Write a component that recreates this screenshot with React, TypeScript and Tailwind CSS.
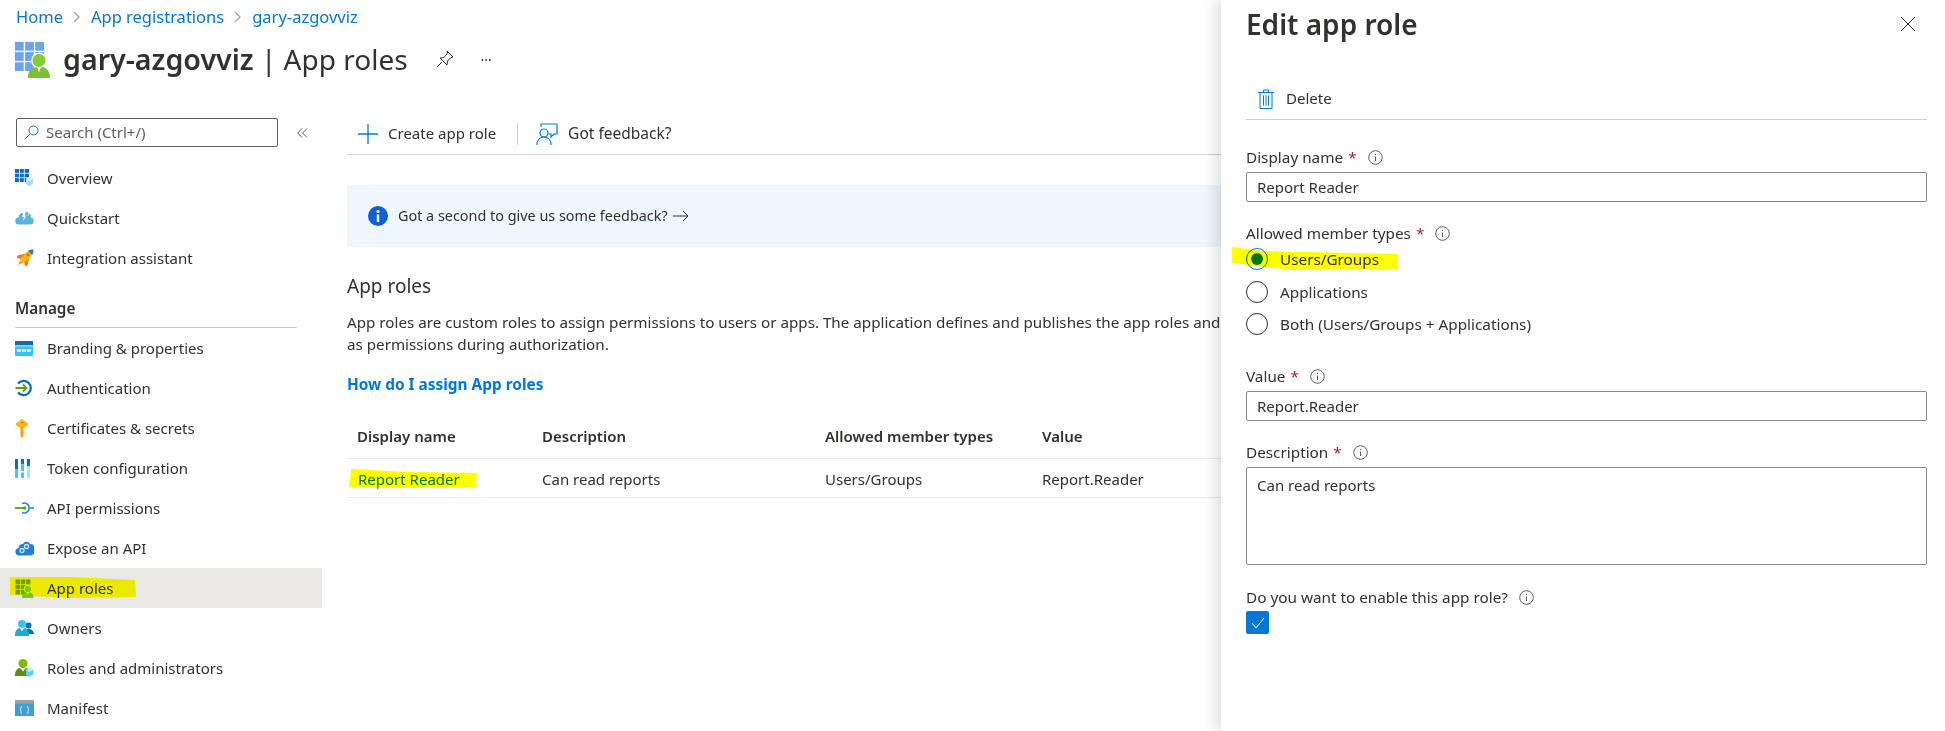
import React from "react";

const Grid = ({ c = "#6aa5f0" }: { c?: string }) => (
  <>
    {[0, 1, 2].map((r) =>
      [0, 1, 2].map((k) => (
        <rect key={`${r}${k}`} x={k * 11 + 1} y={r * 11 + 1} width="9.5" height="9.5" fill={c} />
      ))
    )}
  </>
);

const Person = ({ c = "#86cc30", d = "#7bc22f" }: { c?: string; d?: string }) => (
  <>
    <circle cx="27" cy="21" r="7" fill={c} />
    <path d="M15 40c0-8 4-11 9-12l3 5 3-5c5 1 9 4 9 12z" fill={d} />
    <path d="M25 28h4l-2 6z" fill="#fff" />
  </>
);

const AppRegIcon = ({ size }: { size: number }) => (
  <svg width={size} height={size} viewBox="0 0 40 40">
    <Grid />
    <circle cx="27" cy="21" r="8.5" fill="#fff" />
    <Person />
  </svg>
);

const icons: Record<string, React.ReactNode> = {
  Overview: (
    <svg width="18" height="18" viewBox="0 0 18 18">
      <path d="M0 0h14v13H0z" fill="#0f6cbd" />
      <path d="M4.500 0v13M9.300 0v13M0 4.300h14M0 8.700h14" stroke="#fff" strokeWidth=".8" />
      <path d="M11 10l3.500-2 3.500 2v5l-3.500 2.500L11 15z" fill="#a9dcf3" />
      <path d="M11 10l3.500 2 3.500-2-3.500-2z" fill="#d8f1fb" />
    </svg>
  ),
  Quickstart: (
    <svg width="19" height="14" viewBox="0 0 19 14">
      <path d="M4 13.500a3.500 3.500 0 0 1-.5-7A4.500 4.500 0 0 1 8 2c1-1.500 4-2 5.500 0a3.500 3.500 0 0 1 2 4.500A3.500 3.500 0 0 1 15 13.500z" fill="#59b4d9" />
      <path d="M8.500 1L7 6h2l-1 4 3.500-5.500H9.500L11 1zM13.500 2l-1 2.500h1.500z" fill="#fff" />
    </svg>
  ),
  "Integration assistant": (
    <svg width="19" height="19" viewBox="0 0 19 19">
      <g transform="rotate(45 9.500 9.500)">
        <path d="M9.500 -3C13 0 13.500 7 12.500 13h-6C5.500 7 6 0 9.500 -3z" fill="#fcb714" />
        <path d="M9.500 -3c1.600 1.300 2.500 2.800 3 4.500h-6c.5-1.700 1.400-3.200 3-4.500z" fill="#1e7fd0" />
        <circle cx="9.500" cy="4.500" r="1.500" fill="#f06a0a" />
        <path d="M6.500 6L2.500 12l1 2.500 3.500-2zM12.500 6l4 6-1 2.500-3.500-2z" fill="#ea7d0c" />
        <path d="M7.500 13h4l-2 6z" fill="#f7a70a" />
      </g>
    </svg>
  ),
  "Branding & properties": (
    <svg width="18" height="15" viewBox="0 0 18 15">
      <rect width="18" height="15" fill="#32c5f4" />
      <rect width="18" height="4.500" fill="#0f6cbd" />
      <rect y="4.500" width="18" height=".8" fill="#fff" />
      <path d="M2 8l1 3 1-3 1 3 1-3M7 8l1 3 1-3 1 3 1-3M12 8l1 3 1-3 1 3 1-3" fill="none" stroke="#fff" strokeWidth=".8" />
    </svg>
  ),
  Authentication: (
    <svg width="18" height="18" viewBox="0 0 18 18">
      <path d="M3 4.500a7.200 7.200 0 1 1 0 9" fill="none" stroke="#0f6cbd" strokeWidth="2.300" />
      <path d="M.500 9h10.500M8 5.500L11.500 9 8 12.500" fill="none" stroke="#58a300" strokeWidth="1.800" />
    </svg>
  ),
  "Certificates & secrets": (
    <svg width="14" height="19" viewBox="0 0 14 19">
      <path d="M7 0l6 4.500v2L7 10 1 6.500v-2z" fill="#fdb813" />
      <path d="M5.500 8h3v9.500L7 19l-1.500-1.500z" fill="#f7a70a" />
      <rect x="5.500" y="3" width="3" height="1.300" fill="#c98a08" />
      <rect x="8.500" y="12.500" width="1.300" height="1.600" fill="#f7a70a" />
    </svg>
  ),
  "Token configuration": (
    <svg width="15" height="19" viewBox="0 0 15 19">
      <rect x="0" width="3" height="19" fill="#45c6f2" />
      <rect x="0" width="3" height="10" fill="#0f6cbd" />
      <rect x="6" width="3" height="19" fill="#45c6f2" />
      <rect x="6" width="3" height="5" fill="#0f6cbd" />
      <rect x="6" y="12" width="3" height="1.500" fill="#fff" />
      <rect x="12" width="3" height="19" fill="#a7e3f7" />
      <rect x="12" width="3" height="7" fill="#0f6cbd" />
    </svg>
  ),
  "API permissions": (
    <svg width="19" height="14" viewBox="0 0 19 14">
      <path d="M7 2.500a5 5 0 1 1 0 9" fill="none" stroke="#2a8fbf" strokeWidth="1.600" />
      <path d="M14 7h5" stroke="#2a8fbf" strokeWidth="1.600" />
      <path d="M0 7h9" stroke="#58a300" strokeWidth="1.800" />
      <circle cx="9.500" cy="7" r="1.800" fill="#58a300" />
    </svg>
  ),
  "Expose an API": (
    <svg width="19" height="15" viewBox="0 0 19 15">
      <path d="M4 14.500a3.800 3.800 0 0 1-.6-7.500A5 5 0 0 1 8 3c1-2.500 5.500-3.500 7 0a4 4 0 0 1 .500 11.500z" fill="#1e7fe0" />
      <circle cx="7" cy="9.500" r="2" fill="none" stroke="#cfe6fb" strokeWidth="1.300" />
      <circle cx="11.500" cy="5.500" r="2" fill="none" stroke="#cfe6fb" strokeWidth="1.300" />
    </svg>
  ),
  "App roles": <AppRegIcon size={19} />,
  Owners: (
    <svg width="19" height="16" viewBox="0 0 19 16">
      <circle cx="13.500" cy="5.500" r="3" fill="#0f6cbd" />
      <path d="M9 14c0-3 2-5 4.500-5S19 11 19 14z" fill="#0f6cbd" />
      <circle cx="7" cy="4" r="4" fill="#32c5f4" />
      <path d="M0 16c0-5 2-7.500 4.500-8L7 11l2.500-3c2.500.5 4.500 3 4.500 8z" fill="#1fa7d8" />
    </svg>
  ),
  "Roles and administrators": (
    <svg width="19" height="18" viewBox="0 0 19 18">
      <circle cx="8" cy="4.500" r="4.500" fill="#7fba00" />
      <path d="M0 17c0-5 2-7.500 5-8l3 3 3-3c3 .5 4 3 4 8z" fill="#5e8c12" />
      <path d="M7 9h2l-1 4z" fill="#fff" />
      <path d="M11 11l3.500-2 4 2v4.500l-4 2.500-3.500-2z" fill="#5ed0f5" />
      <path d="M11 11l3.500 2 4-2-4-2z" fill="#b5ecfb" />
    </svg>
  ),
  Manifest: (
    <svg width="19" height="16" viewBox="0 0 19 16">
      <rect width="19" height="16" fill="#3f9fd4" />
      <rect width="19" height="3.500" fill="#a0a1a2" />
      <path d="M7 6.500c-1.500 0-1 1.500-1 2.500s-1 1-1 1 1 0 1 1-.5 2.500 1 2.500M12 6.500c1.500 0 1 1.500 1 2.500s1 1 1 1-1 0-1 1 .5 2.500-1 2.500" fill="none" stroke="#fff" strokeWidth=".8" />
    </svg>
  ),
};

const NavRow = ({ label, active }: { label: string; active?: boolean }) => (
  <div className={`relative flex h-10 items-center ${active ? "bg-[#ebe9e7]" : ""}`}>
    <span className="flex w-[47px] shrink-0 justify-start pl-[15px]">{icons[label]}</span>
    <span className="text-[#323130]">{label}</span>
    {active && (
      <svg className="absolute left-[10px] top-[8px] mix-blend-multiply" width="126" height="22" viewBox="0 0 126 22">
        <path d="M0 1L60 1 125 4 126 21 60 22 0 19z" fill="#ffff00" />
      </svg>
    )}
  </div>
);

const Info = () => (
  <svg width="15" height="15" viewBox="0 0 15 15" className="ml-[11px]">
    <circle cx="7.500" cy="7.500" r="6.800" fill="none" stroke="#605e5c" />
    <path d="M7.500 6.500v4.500" stroke="#605e5c" />
    <circle cx="7.500" cy="4.500" r=".7" fill="#605e5c" />
  </svg>
);

const Label = ({ text, req, className = "" }: { text: string; req?: boolean; className?: string }) => (
  <div className={`flex h-[22px] items-center text-[15.3px] text-[#323130] ${className}`}>
    <span>{text}</span>
    {req && <span className="ml-[5px] text-[#a4262c]">*</span>}
    <Info />
  </div>
);

const Field = ({ text, className = "" }: { text: string; className?: string }) => (
  <div className={`rounded-[2px] border border-[#8a8886] px-[10px] text-[#323130] ${className}`}>{text}</div>
);

const Radio = ({ label, checked, className = "" }: { label: string; checked?: boolean; className?: string }) => (
  <div className={`relative flex h-8 items-center ${className}`}>
    <span className={`flex size-[22px] items-center justify-center rounded-full border ${checked ? "border-[#0078d4]" : "border-[#323130]"}`}>
      {checked && <span className="size-[12px] rounded-full bg-[#0078d4]" />}
    </span>
    <span className="ml-[12px] text-[15.3px] text-[#323130]">{label}</span>
    {checked && (
      <svg className="absolute left-[-14px] top-[4px] mix-blend-multiply" width="166" height="23" viewBox="0 0 166 23">
        <path d="M0 0L30 4 166 7 166 22 60 23 0 16z" fill="#ffff00" />
      </svg>
    )}
  </div>
);

const Crumb = () => (
  <svg width="8" height="12" viewBox="0 0 8 12" className="mx-[10px]">
    <path d="M1 1l5 5-5 5" fill="none" stroke="#a19f9d" strokeWidth="1.200" />
  </svg>
);

export default function App() {
  return (
    <div className="relative h-[731px] w-[1945px] overflow-hidden bg-white font-['Noto_Sans',sans-serif] text-[15px]">
      <div className="flex h-[34px] items-center pl-4 text-[16.5px] text-[#0078d4]">
        <span>Home</span>
        <Crumb />
        <span>App registrations</span>
        <Crumb />
        <span>gary-azgovviz</span>
      </div>

      <div className="flex h-[50px] items-center pl-[14px]">
        <AppRegIcon size={37} />
        <h1 className="ml-[12px] text-[28px] text-[#323130]">
          <span className="text-[28.6px] font-semibold">gary-azgovviz</span> | App roles
        </h1>
        <svg width="18" height="18" viewBox="0 0 18 18" className="ml-[28px]" fill="none" stroke="#323130">
          <path d="M11 1l6 6-2 .5-3.500 3.500-.5 4-7-7 4-.5L11.500 3zM6 12l-5 5" />
        </svg>
        <span className="ml-[27px] mb-2 text-[14px] text-[#323130]">...</span>
      </div>

      <div className="flex">
        <aside className="w-[322px] shrink-0 pt-[34px]">
          <div className="flex items-center pl-4">
            <div className="flex h-[29px] w-[262px] items-center rounded-[2px] border border-[#605e5c] pl-[7px] text-[#605e5c]">
              <svg width="15" height="15" viewBox="0 0 15 15" fill="none" className="mr-[7px]">
                <circle cx="9.500" cy="5.500" r="4.500" stroke="#0078d4" />
                <path d="M6 9l-5 5" stroke="#0078d4" />
              </svg>
              Search (Ctrl+/)
            </div>
            <svg width="11" height="10" viewBox="0 0 11 10" fill="none" stroke="#605e5c" className="ml-[19px]">
              <path d="M5 0.500L.7 5 5 9.500M10 .5L5.700 5 10 9.500" />
            </svg>
          </div>

          <div className="mt-[11px]">
            <NavRow label="Overview" />
            <NavRow label="Quickstart" />
            <NavRow label="Integration assistant" />
            <div className="ml-[15px] mr-[25px] flex h-[50px] items-end border-b border-[#c8c6c4] pb-[7px] text-[15.3px] font-semibold text-[#323130]">
              Manage
            </div>
            <NavRow label="Branding & properties" />
            <NavRow label="Authentication" />
            <NavRow label="Certificates & secrets" />
            <NavRow label="Token configuration" />
            <NavRow label="API permissions" />
            <NavRow label="Expose an API" />
            <NavRow label="App roles" active />
            <NavRow label="Owners" />
            <NavRow label="Roles and administrators" />
            <NavRow label="Manifest" />
          </div>
        </aside>

        <main className="min-w-0 flex-1 pl-[25px] pt-[34px] text-[#323130]">
          <div className="flex h-[37px] items-center border-b border-[#d2d0ce] pb-[5px]">
            <svg width="20" height="20" viewBox="0 0 20 20" className="ml-[11px]" stroke="#0078d4"><path d="M10 0v20M0 10h20" strokeWidth="1.300" /></svg>
            <span className="ml-[10px]">Create app role</span>
            <span className="ml-[21px] h-[22px] w-px bg-[#d2d0ce]" />
            <svg width="22" height="22" viewBox="0 0 22 22" className="ml-[18px]" fill="none" stroke="#0078d4" strokeWidth="1.200">
              <path d="M5 4V1h16v10h-3l-3 3v-3h-2" />
              <circle cx="8" cy="10" r="4" />
              <path d="M1 22c0-5 3-8 7-8s7 3 7 8" />
            </svg>
            <span className="ml-[10px] text-[15.5px]">Got feedback?</span>
          </div>

          <div className="mt-[30px] flex h-[62px] items-center bg-[#eff6fc] pl-[21px]">
            <svg width="20" height="20" viewBox="0 0 20 20">
              <circle cx="10" cy="10" r="10" fill="#0f5fd6" />
              <rect x="8.800" y="8.500" width="2.400" height="7.500" fill="#fff" />
              <circle cx="10" cy="5.500" r="1.500" fill="#fff" />
            </svg>
            <span className="ml-[10px] text-[14.4px]">Got a second to give us some feedback?</span>
            <svg width="16" height="12" viewBox="0 0 16 12" className="ml-[5px]" fill="none" stroke="#323130"><path d="M0 6h15M10 1l5 5-5 5" /></svg>
          </div>

          <h2 className="mt-[27px] text-[19px] leading-[24px]">App roles</h2>
          <p className="mt-[13px] whitespace-nowrap text-[15.2px] leading-[22px]">
            App roles are custom roles to assign permissions to users or apps. The application defines and publishes the app roles and
            <br />
            as permissions during authorization.
          </p>
          <div className="mt-[19px] font-bold leading-[22px] text-[#0078d4] text-[15.4px]">How do I assign App roles</div>

          <div className="mt-[19px] grid h-[44px] grid-cols-[195px_283px_217px_1fr] items-end border-b border-[#edebe9] pb-[11px] font-semibold">
            <span className="pl-[10px]">Display name</span>
            <span>Description</span>
            <span>Allowed member types</span>
            <span>Value</span>
          </div>
          <div className="relative grid h-[39px] grid-cols-[195px_283px_217px_1fr] items-center border-b border-[#edebe9] pt-[2px]">
            <span className="pl-[11px] text-[#0078d4]">Report Reader</span>
            <span>Can read reports</span>
            <span>Users/Groups</span>
            <span>Report.Reader</span>
            <svg className="absolute left-[2px] top-[10px] mix-blend-multiply" width="128" height="20" viewBox="0 0 128 20">
              <path d="M2 0L60 3 128 4 127 18 60 19 0 18z" fill="#ffff00" />
            </svg>
          </div>
        </main>
      </div>

      <section className="absolute bottom-0 right-0 top-0 w-[724px] bg-white pl-[25px] pr-[18px] shadow-[-6px_0_12px_rgba(0,0,0,0.12)]">
        <div className="flex h-[48px] items-center justify-between">
          <h2 className="text-[28px] font-semibold text-[#323130]">Edit app role</h2>
          <svg width="16" height="16" viewBox="0 0 16 16" className="mr-[11px]" stroke="#323130"><path d="M1 1l14 14M15 1L1 15" /></svg>
        </div>
        <div className="mt-[30px] flex h-[42px] items-center border-b border-[#d2d0ce] text-[#323130]">
          <svg width="16" height="20" viewBox="0 0 16 20" className="ml-[12px]" fill="none" stroke="#0078d4">
            <path d="M0 3.500h16M5.500 3V1h5v2M2 3.500V19.500h12V3.500M5.500 6.500v10M8 6.500v10M10.500 6.500v10" />
          </svg>
          <span className="ml-[12px]">Delete</span>
        </div>

        <Label text="Display name" req className="mt-[26px]" />
        <Field text="Report Reader" className="mt-[4px] flex h-[30px] items-center" />

        <Label text="Allowed member types" req className="mt-[20px]" />
        <div className="-mt-px">
          <Radio label="Users/Groups" checked />
          <Radio label="Applications" className="mt-px" />
          <Radio label="Both (Users/Groups + Applications)" />
        </div>

        <Label text="Value" req className="mt-[25px]" />
        <Field text="Report.Reader" className="mt-[4px] flex h-[30px] items-center" />

        <Label text="Description" req className="mt-[20px]" />
        <Field text="Can read reports" className="mt-[4px] h-[98px] pt-[6px]" />

        <Label text="Do you want to enable this app role?" className="mt-[21px]" />
        <div className="mt-[3px] flex h-[23px] w-[23px] items-center justify-center rounded-[2px] bg-[#0078d4]">
          <svg width="14" height="12" viewBox="0 0 14 12" fill="none" stroke="#fff"><path d="M1 6l4 5 8-10" /></svg>
        </div>
      </section>
    </div>
  );
}
